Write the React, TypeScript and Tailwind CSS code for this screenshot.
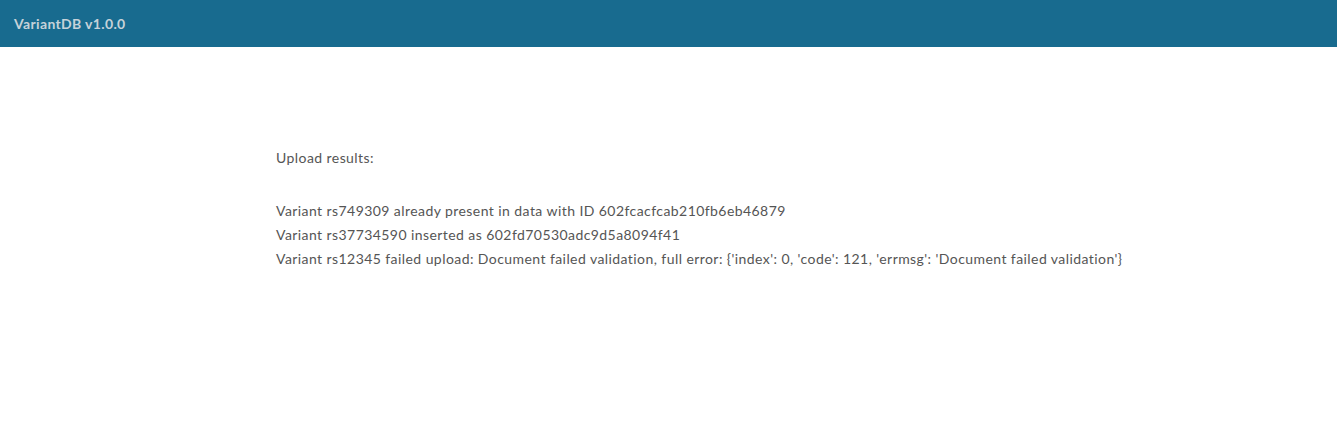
import React from 'react';

const lines = [
  'Variant rs749309 already present in data with ID 602fcacfcab210fb6eb46879',
  'Variant rs37734590 inserted as 602fd70530adc9d5a8094f41',
  "Variant rs12345 failed upload: Document failed validation, full error: {'index': 0, 'code': 121, 'errmsg': 'Document failed validation'}",
];

const App: React.FC = () => {
  return (
    <div className="min-h-screen bg-white font-['Lato',sans-serif] text-[14px] text-[#555555]">
      <nav className="h-[47px] bg-[#186b8f] flex items-center px-[14px]">
        <span className="text-[14px] font-bold tracking-[0.35px] text-[#c6d2d9]">VariantDB v1.0.0</span>
      </nav>
      <main className="pl-[276px] pt-[99px] tracking-[0.43px]">
        <p className="leading-[24px]">Upload results:</p>
        <div className="mt-[29px] leading-[24px]">
          {lines.map((line) => (
            <div key={line}>{line}</div>
          ))}
        </div>
      </main>
    </div>
  );
};

export default App;
